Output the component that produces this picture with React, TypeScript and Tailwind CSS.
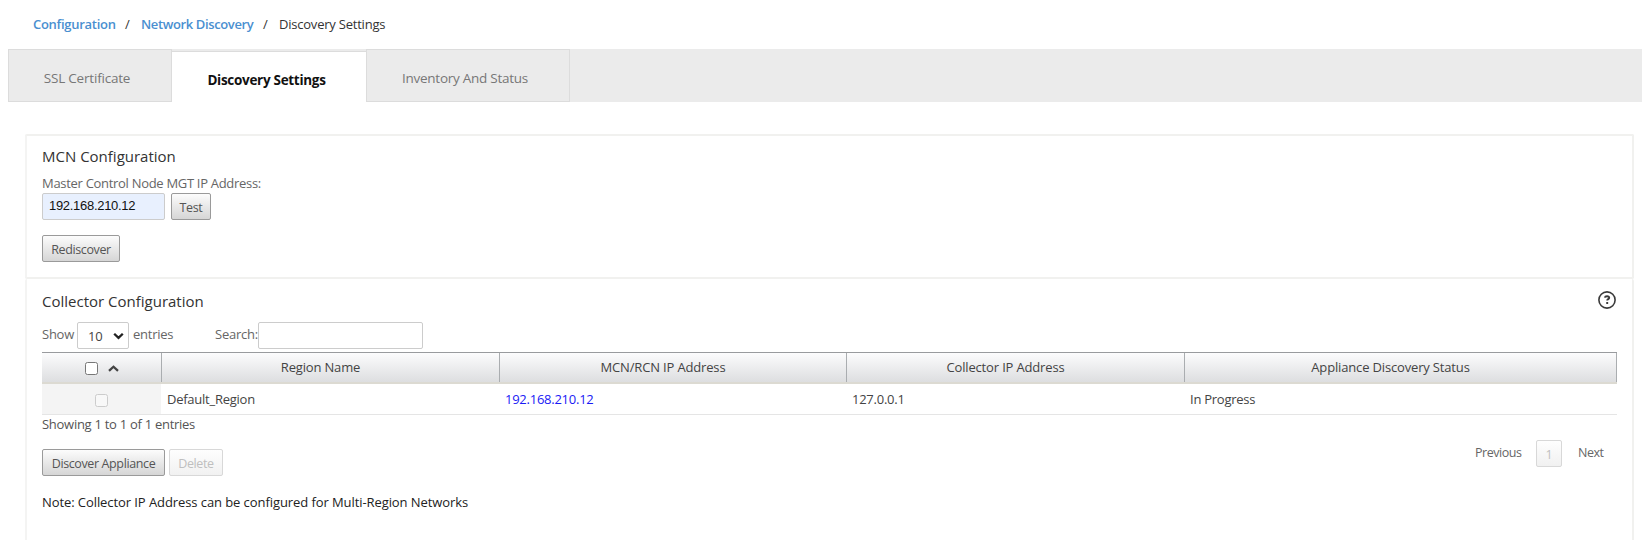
import React from "react";

const buttonBase =
  "block h-[27px] shrink-0 whitespace-nowrap rounded-[2px] border pt-px text-center text-[12.5px] tracking-[-0.38px] leading-[25px]";
const buttonActive =
  "border-[#9a9a9a] bg-linear-to-b from-[#fcfcfc] to-[#d6d6d6] text-[#555]";
const buttonDisabled =
  "border-[#d8d8d8] bg-linear-to-b from-[#fefefe] to-[#f1f1f1] text-[#bfbfbf]";

const columns = [
  { name: "Region Name", value: "Default_Region", head: "w-[338px] pr-[20px]", width: "w-[338px]", cls: "text-[#444]" },
  { name: "MCN/RCN IP Address", value: "192.168.210.12", head: "w-[347px] pr-[20px]", width: "w-[347px]", cls: "text-[#1a1af5]" },
  { name: "Collector IP Address", value: "127.0.0.1", head: "w-[338px] pr-[20px]", width: "w-[338px]", cls: "text-[#444]" },
  { name: "Appliance Discovery Status", value: "In Progress", head: "w-[432px] pr-[20px]", width: "w-[433px]", cls: "text-[#444]" },
];

function Breadcrumb() {
  return (
    <nav className="flex h-[48px] items-center pl-[33px] text-[13px] leading-[20px] text-[#333]">
      <a className="w-[92px] font-semibold tracking-[-0.28px] text-[#4a8fd0]">Configuration</a>
      <span className="w-4">/</span>
      <a className="w-[122px] whitespace-nowrap font-semibold tracking-[-0.37px] text-[#4a8fd0]">Network Discovery</a>
      <span className="w-[16px]">/</span>
      <span className="tracking-[-0.22px]">Discovery Settings</span>
    </nav>
  );
}

function Tabs() {
  return (
    <div className="ml-2 mt-px flex h-[53px] bg-[#ebebeb] text-[13.5px] text-[#777]">
      <div className="w-[164px] border border-[#dcdcdc] pr-[6px] pt-[18px] text-center leading-[20px] tracking-[-0.2px]">
        SSL Certificate
      </div>
      <div className="mt-[2px] w-[194px] border-t border-[#dcdcdc] bg-white pr-[5px] pt-[18px] text-center font-bold leading-[20px] tracking-[-0.3px] text-[#111]">
        Discovery Settings
      </div>
      <div className="w-[204px] border border-[#dcdcdc] pr-[6px] pt-[18px] text-center leading-[20px] tracking-[-0.26px]">
        Inventory And Status
      </div>
    </div>
  );
}

function McnCard() {
  return (
    <section className="h-[145px] rounded-[2px] border-2 border-[#f1f1ef] border-l-[#f4f4f3] pl-[15px] pt-[9px]">
      <h2 className="text-[15px] leading-[22px] text-[#333]">MCN Configuration</h2>
      <label className="mt-[7px] block text-[13px] leading-[18px] tracking-[-0.3px] text-[#666]">
        Master Control Node MGT IP Address:
      </label>
      <div className="mt-px flex h-[27px] gap-[6px]">
        <div className="h-[27px] w-[123px] rounded-[2px] border border-[#ccc] bg-[#e8f0fe] pl-[6px] font-['Liberation_Sans'] text-[13px] leading-[24px] tracking-[-0.3px] text-[#111]">
          192.168.210.12
        </div>
        <button className={`${buttonBase} ${buttonActive} w-10`}>Test</button>
      </div>
      <button className={`${buttonBase} ${buttonActive} mt-[15px] w-[78px]`}>Rediscover</button>
    </section>
  );
}

function Toolbar() {
  return (
    <div className="flex h-[27px] text-[13px] leading-[26px] tracking-[-0.25px] text-[#666]">
      <span className="w-[35px]">Show</span>
      <div className="mt-px flex h-[27px] w-[52px] items-center justify-between rounded-[2px] border border-[#ccc] bg-white pl-[10px] pr-[4px] text-[#444]">
        <span>10</span>
        <svg width="11" height="8" viewBox="0 0 11 8" fill="none" stroke="#222" strokeWidth="2.3">
          <path d="M1.2 1.7 5.5 5.9 9.8 1.7" />
        </svg>
      </div>
      <span className="ml-1 w-[82px]">entries</span>
      <span className="w-[43px]">Search:</span>
      <div className="mt-px h-[27px] w-[165px] rounded-[2px] border border-[#ccc] bg-white" />
    </div>
  );
}

function RegionTable() {
  return (
    <div className="w-[1575px] text-[13px]">
      <div className="flex h-8 border-b-2 border-t border-b-[#dcdad2] border-t-[#999b9e] bg-linear-to-b from-[#fcfcfd] to-[#dddee0] tracking-[-0.16px] text-[#444]">
        <div className="flex w-[120px] items-center gap-[10px] border-r border-[#aaadb0] pl-[43px] pt-[2px]">
          <span className="h-[13px] w-[13px] rounded-[2.5px] border border-[#777] bg-white" />
          <svg width="11" height="8" viewBox="0 0 11 8" fill="none" stroke="#444" strokeWidth="2.3">
            <path d="M1 5.8 5.5 1.7 10 5.8" />
          </svg>
        </div>
        {columns.map((c) => (
          <div key={c.name} className={`${c.head} border-r border-[#aaadb0] pt-px text-center leading-[26px]`}>
            {c.name}
          </div>
        ))}
      </div>
      <div className="flex h-[31px] border-b border-[#e5e5e5] tracking-[-0.25px]">
        <div className="flex w-[119px] items-center justify-center bg-[#f4f4f4] pt-[2px]">
          <span className="h-[13px] w-[13px] rounded-[2.5px] border border-[#ccc] bg-[#f8f8f8]" />
        </div>
        {columns.map((c) => (
          <div key={c.name} className={`${c.width} pl-[6px] leading-[31px] ${c.cls}`}>
            {c.value}
          </div>
        ))}
      </div>
    </div>
  );
}

function CollectorCard() {
  return (
    <section className="h-[300px] rounded-[2px] border-2 border-t-0 border-[#f1f1ef] border-l-[#f4f4f3] pl-[15px] pt-[11px]">
      <div className="flex h-[22px] items-start justify-between pr-4">
        <h2 className="text-[15px] leading-[22px] text-[#333]">Collector Configuration</h2>
        <svg className="mt-px" width="18" height="18" viewBox="0 0 18 18" fill="none" stroke="#3a3a3a" strokeWidth="1.6">
          <circle cx="9" cy="9" r="8.1" />
          <path d="M6.8 6.7C7 5.6 7.9 5.2 9 5.2s2.2.5 2.2 1.6c0 1.4-2 1.3-2 2.8M9.2 11.1v2" strokeWidth="1.9" />
        </svg>
      </div>
      <div className="mt-[9px]"><Toolbar /></div>
      <div className="mt-[4px]"><RegionTable /></div>
      <div className="flex justify-between pr-[27px] text-[13px]">
        <div>
          <p className="leading-[18px] tracking-[-0.28px] text-[#555]">Showing 1 to 1 of 1 entries</p>
          <div className="mt-[16px] flex gap-1">
            <button className={`${buttonBase} ${buttonActive} w-[123px]`}>Discover Appliance</button>
            <button className={`${buttonBase} ${buttonDisabled} w-[54px]`}>Delete</button>
          </div>
          <p className="mt-[16px] whitespace-nowrap leading-[20px] tracking-[-0.08px] text-[#222]">
            Note: Collector IP Address can be configured for Multi-Region Networks
          </p>
        </div>
        <div className="mt-[25px] flex h-[27px] text-[12.5px] leading-[25px] tracking-[-0.45px] text-[#666]">
          <span className="w-[61px]">Previous</span>
          <span className={`${buttonBase} ${buttonDisabled} w-[26px]`}>1</span>
          <span className="ml-4 w-[27px]">Next</span>
        </div>
      </div>
    </section>
  );
}

export default function App() {
  return (
    <div className="h-[540px] w-[1642px] overflow-hidden bg-white font-['Open_Sans',sans-serif]">
      <Breadcrumb />
      <Tabs />
      <main className="ml-[25px] mt-[32px] w-[1609px]">
        <McnCard />
        <CollectorCard />
      </main>
    </div>
  );
}
